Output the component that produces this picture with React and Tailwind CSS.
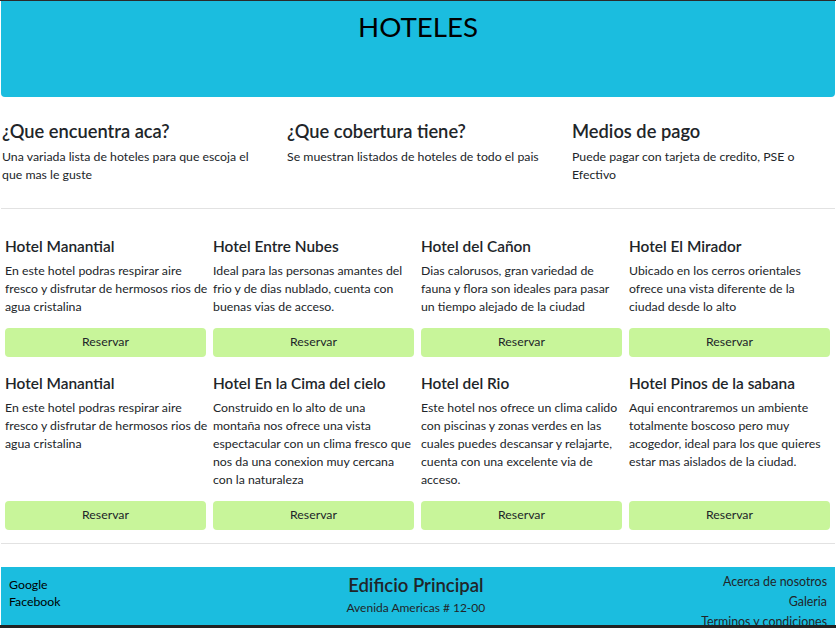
import React from 'react';

// Info columns shown under the header.
const info = [
  { title: '¿Que encuentra aca?', text: 'Una variada lista de hoteles para que escoja el que mas le guste' },
  { title: '¿Que cobertura tiene?', text: 'Se muestran listados de hoteles de todo el pais' },
  { title: 'Medios de pago', text: 'Puede pagar con tarjeta de credito, PSE o Efectivo' },
];

// Hotel cards, two rows of four. `wide` lets the text run a few px past the card.
const rows = [
  [
    { name: 'Hotel Manantial', wide: true, text: 'En este hotel podras respirar aire fresco y disfrutar de hermosos rios de agua cristalina' },
    { name: 'Hotel Entre Nubes', text: 'Ideal para las personas amantes del frio y de dias nublado, cuenta con buenas vias de acceso.' },
    { name: 'Hotel del Cañon', text: 'Dias calorusos, gran variedad de fauna y flora son ideales para pasar un tiempo alejado de la ciudad' },
    { name: 'Hotel El Mirador', text: 'Ubicado en los cerros orientales ofrece una vista diferente de la ciudad desde lo alto' },
  ],
  [
    { name: 'Hotel Manantial', wide: true, text: 'En este hotel podras respirar aire fresco y disfrutar de hermosos rios de agua cristalina' },
    { name: 'Hotel En la Cima del cielo', text: 'Construido en lo alto de una montaña nos ofrece una vista espectacular con un clima fresco que nos da una conexion muy cercana con la naturaleza' },
    { name: 'Hotel del Rio', text: 'Este hotel nos ofrece un clima calido con piscinas y zonas verdes en las cuales puedes descansar y relajarte, cuenta con una excelente via de acceso.' },
    { name: 'Hotel Pinos de la sabana', text: 'Aqui encontraremos un ambiente totalmente boscoso pero muy acogedor, ideal para los que quieres estar mas aislados de la ciudad.' },
  ],
];

function HotelCard({ name, text, wide }) {
  return (
    <div className="flex flex-col w-[201px] shrink-0">
      <h5 className="text-[15.4px] leading-[20px] font-semibold text-[#212529] mb-[6px]">{name}</h5>
      <p className={`${wide ? 'w-[205px]' : 'w-[201px]'} text-[12.3px] leading-[18px] text-[#212529] flex-grow`}>{text}</p>
      <button className="mt-[12px] h-[29px] w-full rounded-[4px] bg-[#c8f59a] text-[12.3px] text-[#212529]">
        Reservar
      </button>
    </div>
  );
}

export default function App() {
  return (
    <div className="w-[836px] h-[628px] overflow-hidden bg-white font-['Lato',sans-serif] text-[#212529]">
      <div className="h-[1px] bg-[#2b2b2b]" />
      {/* Header */}
      <div className="mx-[1px] h-[96px] rounded-b-[4px] bg-[#1bbddf] flex justify-center">
        <h1 className="mt-[8px] text-[27.7px] leading-[36px] text-black">HOTELES</h1>
      </div>

      {/* Info columns */}
      <div className="flex pl-[2px] pt-[21px] h-[111px]">
        {info.map((c) => (
          <div key={c.title} className="w-[285px] shrink-0 pr-[22px]">
            <h4 className="text-[18.3px] leading-[26px] font-semibold mb-[4px]">{c.title}</h4>
            <p className="text-[12.3px] leading-[18px]">{c.text}</p>
          </div>
        ))}
      </div>
      <hr className="mx-[1px] border-t border-[#e2e2e2]" />

      {/* Hotel cards */}
      <div className="flex flex-col gap-[16px] pl-[5px] pt-[27px]">
        {rows.map((row, i) => (
          <div key={i} className="flex gap-[7px]">
            {row.map((h) => (
              <HotelCard key={h.name} {...h} />
            ))}
          </div>
        ))}
      </div>
      <hr className="mx-[1px] mt-[13px] border-t border-[#e2e2e2]" />

      {/* Footer */}
      <div className="mx-[1px] mt-[23px] h-[58px] bg-[#1bbddf] flex justify-between px-[8px] overflow-hidden">
        <div className="pt-[9px] text-[12.3px] leading-[17px] text-black">
          <div>Google</div>
          <div>Facebook</div>
        </div>
        <div className="pt-[6px] flex flex-col items-center pl-[70px]">
          <div className="text-[18.5px] leading-[24px] font-semibold">Edificio Principal</div>
          <div className="text-[12px] leading-[18px] mt-[2px]">Avenida Americas # 12-00</div>
        </div>
        <div className="pt-[5px] text-[12.4px] leading-[20px] text-right">
          <div>Acerca de nosotros</div>
          <div>Galeria</div>
          <div>Terminos y condiciones</div>
        </div>
      </div>
      <div className="h-[3px] bg-[#222]" />
    </div>
  );
}
